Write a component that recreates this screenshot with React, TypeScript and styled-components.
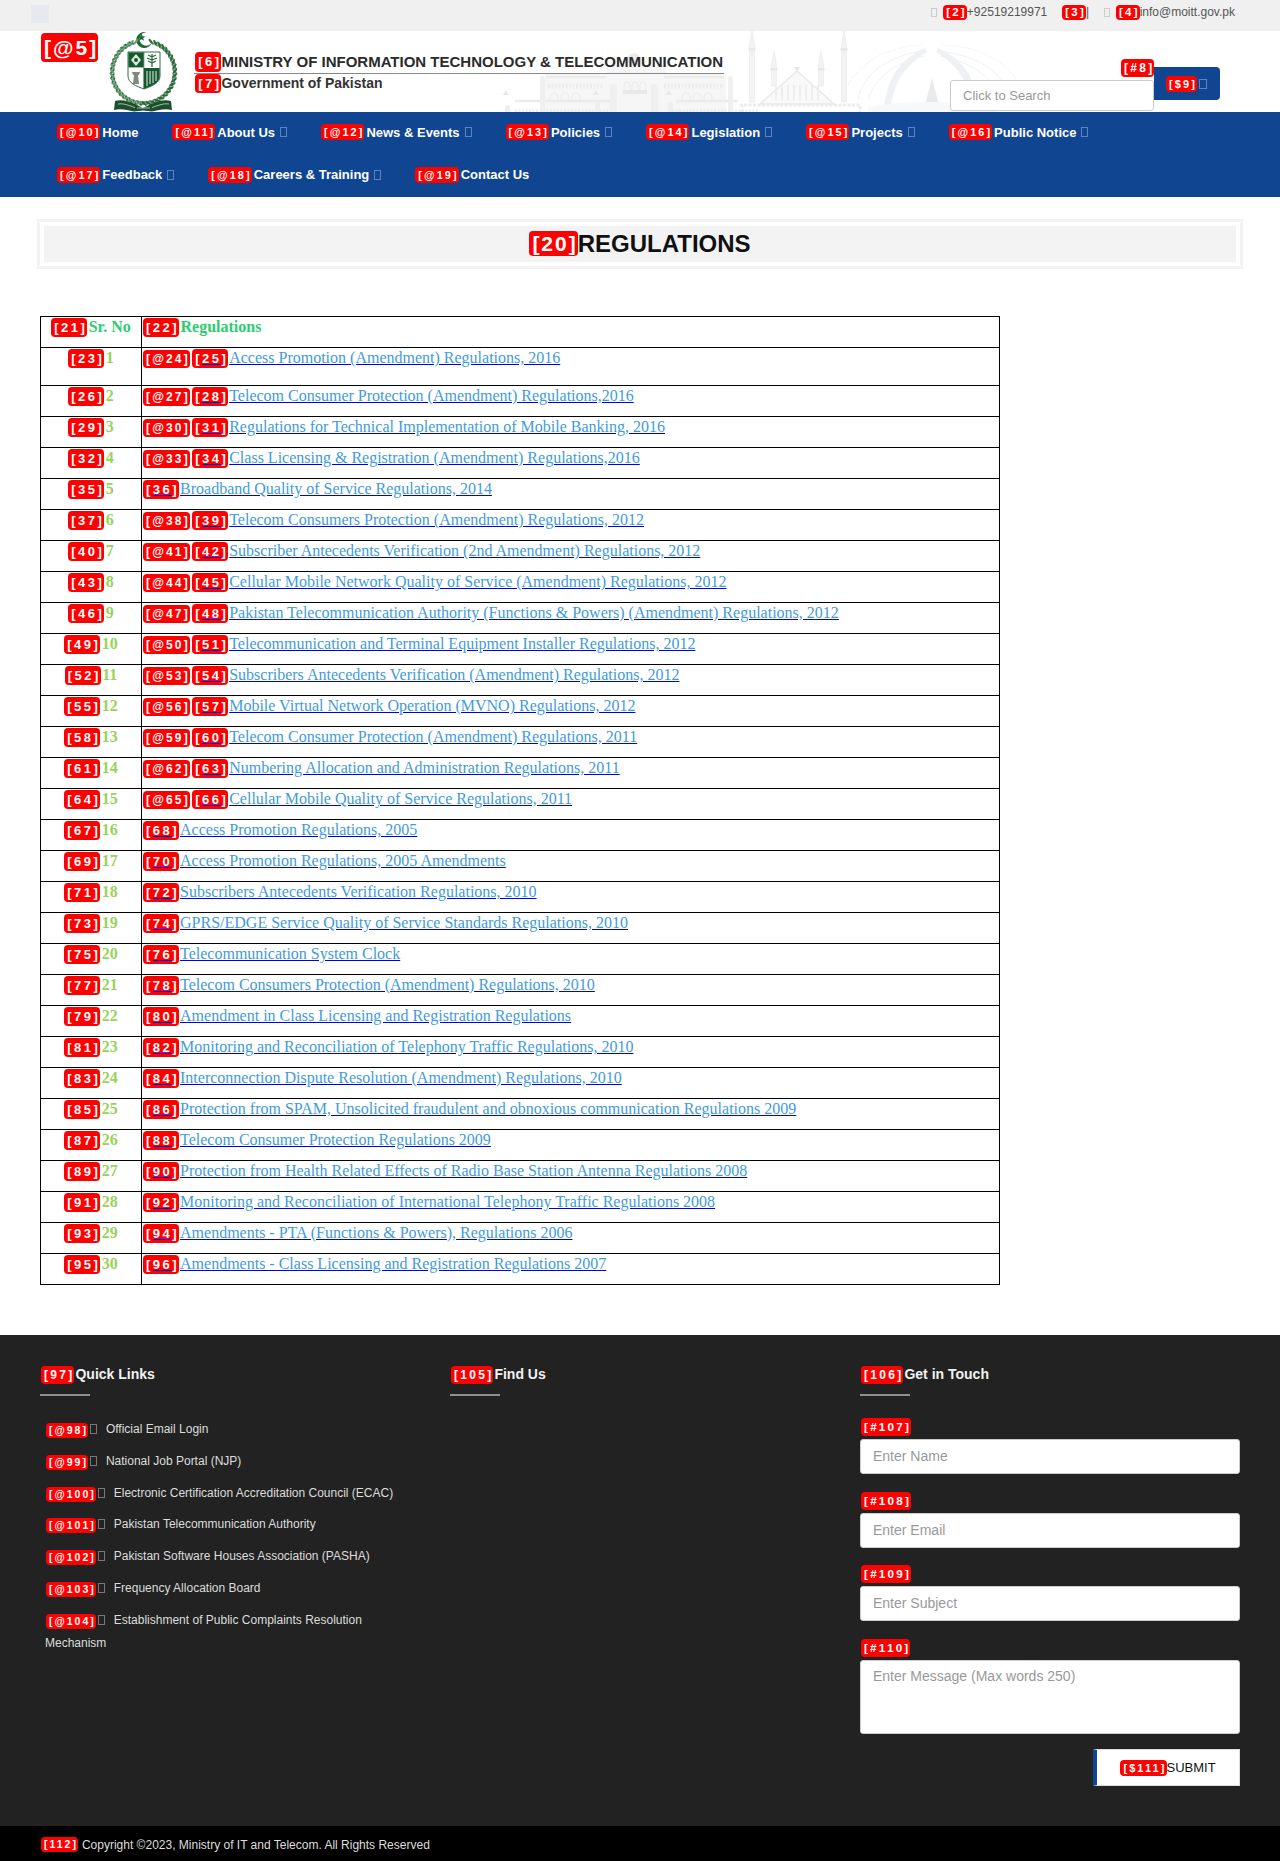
import React from "react";
import styled, { createGlobalStyle } from "styled-components";

const Global = createGlobalStyle`
  html, body { margin: 0; padding: 0; background: #fff; }
  body { font-family: "Liberation Sans", Arial, sans-serif; }
  * { box-sizing: border-box; }
`;

const Page = styled.div`
  width: 1280px;
  height: 1861px;
  overflow: hidden;
  display: flex;
  flex-direction: column;
`;

const Tag = styled.span<{ $size?: number; $h?: number; $ls?: string }>`
  display: inline-block;
  flex: none;
  background: #ff0000;
  color: #fff;
  font-family: "Liberation Sans", Arial, sans-serif;
  font-weight: 700;
  font-size: ${(p) => p.$size ?? 13}px;
  line-height: ${(p) => p.$h ?? 19}px;
  height: ${(p) => p.$h ?? 19}px;
  letter-spacing: ${(p) => p.$ls ?? "0.19em"};
  padding: 0 0 0 3px;
  border-radius: 4px;
  white-space: nowrap;
`;

const Digits = styled.span`
  text-decoration: underline;
  text-decoration-color: #0000ee;
  text-decoration-thickness: 1px;
  text-underline-offset: 1px;
`;

const Tofu = styled.span<{ $color?: string; $w?: number; $h?: number }>`
  display: inline-block;
  flex: none;
  width: ${(p) => p.$w ?? 7}px;
  height: ${(p) => p.$h ?? 10}px;
  border: 1px solid ${(p) => p.$color ?? "#ccc"};
`;

/* ---------- top bar ---------- */
const TopBar = styled.div`
  height: 31px;
  flex: none;
  background: #f0f0f0;
  display: flex;
  align-items: flex-start;
  justify-content: space-between;
  padding: 5px 45px 0 31px;
`;
const SkipSquare = styled.div`
  width: 18px;
  height: 18px;
  background: #e8e9ee;
`;
const Contacts = styled.div`
  display: flex;
  align-items: flex-start;
  height: 15px;
  font-size: 12px;
  line-height: 14px;
  color: #555;
`;
const ContactItem = styled.span<{ $gap?: number }>`
  display: inline-flex;
  align-items: flex-start;
  margin-left: ${(p) => p.$gap ?? 0}px;
`;
const ContactBox = styled(Tofu)<{ $gap?: number }>`
  margin: 3px 0 0 ${(p) => p.$gap ?? 0}px;
`;

/* ---------- header ---------- */
const Header = styled.header`
  position: relative;
  height: 81px;
  flex: none;
  background: #fff;
  display: flex;
  align-items: flex-start;
  padding: 2px 60px 0 41px;
  overflow: hidden;
`;
const Skyline = styled.svg`
  position: absolute;
  left: 0;
  top: 0;
  width: 1280px;
  height: 81px;
`;
const LogoTag = styled(Tag)`
  position: relative;
`;
const Emblem = styled.svg`
  position: relative;
  flex: none;
  width: 69px;
  height: 81px;
  margin: -2px 0 0 11px;
`;
const TitleBlock = styled.div`
  position: relative;
  margin: 19px 0 0 16px;
  width: 530px;
`;
const Ministry = styled.h1`
  margin: 0;
  height: 22px;
  display: flex;
  align-items: flex-start;
  font-size: 15px;
  font-weight: 700;
  line-height: 20px;
  color: #2b2b2b;
  border-bottom: 1px solid #888;
  padding-left: 1px;
  white-space: nowrap;
`;
const Gov = styled.div`
  display: flex;
  padding-left: 1px;
  font-size: 14px;
  font-weight: 700;
  line-height: 19px;
  color: #333;
  white-space: nowrap;
`;
const SearchBox = styled.div`
  position: relative;
  margin: 47px 0 0 auto;
  display: flex;
  align-items: flex-start;
`;
const SearchInput = styled.input`
  width: 204px;
  height: 31px;
  border: 1px solid #ccc;
  border-radius: 3px;
  padding: 0 12px 1px;
  background: #fff;
  font: 13px "Liberation Sans", Arial, sans-serif;
  &::placeholder { color: #999; opacity: 1; }
`;
const SearchFloat = styled(Tag)`
  position: absolute;
  left: 171px;
  top: -21px;
`;
const SearchButton = styled.button`
  width: 66px;
  height: 33px;
  margin-top: -13px;
  border: 0;
  border-radius: 0 4px 4px 0;
  background: #104591;
  display: flex;
  align-items: center;
  padding: 0 0 0 12px;
  gap: 2px;
`;

/* ---------- nav ---------- */
const Nav = styled.nav`
  flex: none;
  height: 85px;
  background: #104591;
  padding: 0 40px;
  display: flex;
  flex-wrap: wrap;
  align-content: flex-start;
`;
const NavItem = styled.a`
  height: 42.5px;
  padding: 0 17px 2px;
  display: flex;
  align-items: center;
  color: #fff;
  font-size: 13px;
  font-weight: 700;
`;
const NavLabel = styled.span`
  margin-left: 2px;
`;
const NavCaret = styled(Tofu)`
  margin-left: 5px;
`;

/* ---------- content ---------- */
const Main = styled.main`
  flex: none;
  padding: 22px 37px 50px;
`;
const Heading = styled.div`
  height: 50px;
  border: 3px solid #f3f3f3;
  padding: 4px;
`;
const HeadingInner = styled.h2`
  margin: 0;
  height: 36px;
  padding-bottom: 2px;
  background: #f3f3f3;
  display: flex;
  align-items: center;
  justify-content: center;
  font-size: 24px;
  font-weight: 700;
  line-height: 25px;
  color: #111;
`;
const Table = styled.table`
  margin: 47px 0 0 3px;
  width: 960px;
  border-collapse: collapse;
  table-layout: fixed;
  font-family: "Liberation Serif", "Times New Roman", serif;
  font-size: 16px;
`;
const Row = styled.tr<{ $h: number }>`
  height: ${(p) => p.$h}px;
`;
const SrCell = styled.td`
  width: 101px;
  border: 1px solid #000;
  padding: 0 1px;
  vertical-align: top;
  text-align: center;
  color: #98d35a;
  font-weight: 700;
  line-height: 20px;
  white-space: nowrap;
`;
const SrHead = styled(SrCell)`
  color: #2ecc71;
`;
const TitleCell = styled.td`
  border: 1px solid #000;
  padding: 0 1px;
  vertical-align: top;
  line-height: 20px;
  white-space: nowrap;
`;
const TitleHead = styled(TitleCell)`
  color: #2ecc71;
  font-weight: 700;
`;
const CellTag = styled(Tag)`
  margin-right: 1.5px;
`;
const SmallTag = styled(Tag)`
  font-size: 12px;
  letter-spacing: 0.18em;
  height: 18px;
  line-height: 18px;
  margin-right: 2.3px;
`;
const DocLink = styled.a`
  color: #0000ee;
  text-decoration: underline;
`;
const DocTitle = styled.span`
  color: #3f9bdc;
  margin-left: 1px;
`;

/* ---------- footer ---------- */
const Footer = styled.footer`
  flex: none;
  height: 491px;
  background: #222;
  padding: 31px 40px 0;
  display: grid;
  grid-template-columns: 410px 410px 380px;
`;
const FooterTitle = styled.h3`
  margin: 0;
  display: flex;
  align-items: flex-start;
  padding-left: 1px;
  color: #f2f2f2;
  font-size: 14px;
  font-weight: 700;
  line-height: 17px;
`;
const FooterLabel = styled.span`
  margin-left: 1px;
`;
const Rule = styled.div`
  width: 50px;
  height: 2px;
  margin-top: 10px;
  background: #8f8f8f;
`;
const QuickList = styled.ul`
  list-style: none;
  margin: 17.6px 0 0;
  padding: 0;
  width: 360px;
`;
const QuickItem = styled.li`
  padding: 4.4px 0 4.4px 5px;
  line-height: 23px;
  font-size: 12px;
  color: #ddd;
`;
const QuickTag = styled(Tag)`
  font-size: 10.5px;
  height: 15px;
  line-height: 15px;
  margin-left: 1px;
  vertical-align: -1px;
`;
const QuickBox = styled(Tofu)`
  margin: 0 9px 0 2px;
  vertical-align: -1px;
  border-color: #777;
`;
const Form = styled.form`
  margin-top: 22px;
`;
const Field = styled.label`
  display: block;
  margin-bottom: 17.5px;
`;
const FieldTag = styled(Tag)`
  display: block;
  width: fit-content;
  font-size: 11.7px;
  height: 18px;
  line-height: 18px;
  margin: 0 0 3px 1px;
`;
const controlCss = `
  display: block;
  width: 380px;
  border: 1px solid #ccc;
  border-radius: 3px;
  background: #fff;
  padding: 0 12px;
  font: 14px "Liberation Sans", Arial, sans-serif;
`;
const Input = styled.input`
  ${controlCss}
  height: 35px;
  padding-bottom: 1px;
  &::placeholder { color: #999; opacity: 1; }
`;
const TextArea = styled.textarea`
  ${controlCss}
  height: 74px;
  padding-top: 7px;
  resize: none;
  &::placeholder { color: #999; opacity: 1; }
`;
const Submit = styled.button`
  display: flex;
  align-items: center;
  justify-content: center;
  width: 147px;
  height: 37px;
  margin: -2px 0 0 233px;
  background: #fff;
  border: 1px solid #ddd;
  border-left: 4px solid #104591;
  color: #111;
  font: 13px "Liberation Sans", Arial, sans-serif;
  padding: 0;
`;
const BottomBar = styled.div`
  flex: none;
  height: 35px;
  background: #000;
  color: #ddd;
  font-size: 12px;
  display: flex;
  align-items: center;
  padding: 2px 0 0 41px;
  gap: 4px;
`;

/* ---------- data ---------- */
type Doc = { sr: number; srTag: number; at?: number; tag: number; title: string };
const docs: Doc[] = [
  { sr: 1, srTag: 23, at: 24, tag: 25, title: "Access Promotion (Amendment) Regulations, 2016" },
  { sr: 2, srTag: 26, at: 27, tag: 28, title: "Telecom Consumer Protection (Amendment) Regulations,2016" },
  { sr: 3, srTag: 29, at: 30, tag: 31, title: "Regulations for Technical Implementation of Mobile Banking, 2016" },
  { sr: 4, srTag: 32, at: 33, tag: 34, title: "Class Licensing & Registration (Amendment) Regulations,2016" },
  { sr: 5, srTag: 35, tag: 36, title: "Broadband Quality of Service Regulations, 2014" },
  { sr: 6, srTag: 37, at: 38, tag: 39, title: "Telecom Consumers Protection (Amendment) Regulations, 2012" },
  { sr: 7, srTag: 40, at: 41, tag: 42, title: "Subscriber Antecedents Verification (2nd Amendment) Regulations, 2012" },
  { sr: 8, srTag: 43, at: 44, tag: 45, title: "Cellular Mobile Network Quality of Service (Amendment) Regulations, 2012" },
  { sr: 9, srTag: 46, at: 47, tag: 48, title: "Pakistan Telecommunication Authority (Functions & Powers) (Amendment) Regulations, 2012" },
  { sr: 10, srTag: 49, at: 50, tag: 51, title: "Telecommunication and Terminal Equipment Installer Regulations, 2012" },
  { sr: 11, srTag: 52, at: 53, tag: 54, title: "Subscribers Antecedents Verification (Amendment) Regulations, 2012" },
  { sr: 12, srTag: 55, at: 56, tag: 57, title: "Mobile Virtual Network Operation (MVNO) Regulations, 2012" },
  { sr: 13, srTag: 58, at: 59, tag: 60, title: "Telecom Consumer Protection (Amendment) Regulations, 2011" },
  { sr: 14, srTag: 61, at: 62, tag: 63, title: "Numbering Allocation and Administration Regulations, 2011" },
  { sr: 15, srTag: 64, at: 65, tag: 66, title: "Cellular Mobile Quality of Service Regulations, 2011" },
  { sr: 16, srTag: 67, tag: 68, title: "Access Promotion Regulations, 2005" },
  { sr: 17, srTag: 69, tag: 70, title: "Access Promotion Regulations, 2005 Amendments" },
  { sr: 18, srTag: 71, tag: 72, title: "Subscribers Antecedents Verification Regulations, 2010" },
  { sr: 19, srTag: 73, tag: 74, title: "GPRS/EDGE Service Quality of Service Standards Regulations, 2010" },
  { sr: 20, srTag: 75, tag: 76, title: "Telecommunication System Clock" },
  { sr: 21, srTag: 77, tag: 78, title: "Telecom Consumers Protection (Amendment) Regulations, 2010" },
  { sr: 22, srTag: 79, tag: 80, title: "Amendment in Class Licensing and Registration Regulations" },
  { sr: 23, srTag: 81, tag: 82, title: "Monitoring and Reconciliation of Telephony Traffic Regulations, 2010" },
  { sr: 24, srTag: 83, tag: 84, title: "Interconnection Dispute Resolution (Amendment) Regulations, 2010" },
  { sr: 25, srTag: 85, tag: 86, title: "Protection from SPAM, Unsolicited fraudulent and obnoxious communication Regulations 2009" },
  { sr: 26, srTag: 87, tag: 88, title: "Telecom Consumer Protection Regulations 2009" },
  { sr: 27, srTag: 89, tag: 90, title: "Protection from Health Related Effects of Radio Base Station Antenna Regulations 2008" },
  { sr: 28, srTag: 91, tag: 92, title: "Monitoring and Reconciliation of International Telephony Traffic Regulations 2008" },
  { sr: 29, srTag: 93, tag: 94, title: "Amendments - PTA (Functions & Powers), Regulations 2006" },
  { sr: 30, srTag: 95, tag: 96, title: "Amendments - Class Licensing and Registration Regulations 2007" },
];

const navItems: { tag: string; label: string; caret: boolean }[] = [
  { tag: "@10", label: "Home", caret: false },
  { tag: "@11", label: "About Us", caret: true },
  { tag: "@12", label: "News & Events", caret: true },
  { tag: "@13", label: "Policies", caret: true },
  { tag: "@14", label: "Legislation", caret: true },
  { tag: "@15", label: "Projects", caret: true },
  { tag: "@16", label: "Public Notice", caret: true },
  { tag: "@17", label: "Feedback", caret: true },
  { tag: "@18", label: "Careers & Training", caret: true },
  { tag: "@19", label: "Contact Us", caret: false },
];

const quick: { tag: string; label: string }[] = [
  { tag: "@98", label: "Official Email Login" },
  { tag: "@99", label: "National Job Portal (NJP)" },
  { tag: "@100", label: "Electronic Certification Accreditation Council (ECAC)" },
  { tag: "@101", label: "Pakistan Telecommunication Authority" },
  { tag: "@102", label: "Pakistan Software Houses Association (PASHA)" },
  { tag: "@103", label: "Frequency Allocation Board" },
  { tag: "@104", label: "Establishment of Public Complaints Resolution Mechanism" },
];

const fields: { tag: string; ph: string }[] = [
  { tag: "#107", ph: "Enter Name" },
  { tag: "#108", ph: "Enter Email" },
  { tag: "#109", ph: "Enter Subject" },
];

/* ---------- drawings ---------- */
function leaves(side: 1 | -1) {
  const out: React.ReactNode[] = [];
  for (let i = 0; i < 20; i++) {
    const t = i / 19;
    const ang = -1.25 + t * 2.75;
    const x = 34.5 + side * 29.5 * Math.cos(ang);
    const y = 41 + 29.5 * Math.sin(ang);
    const rot = side * ((ang * 180) / Math.PI + 90);
    out.push(
      <g key={i} transform={`translate(${x.toFixed(1)} ${y.toFixed(1)}) rotate(${rot.toFixed(0)})`}>
        <ellipse cx={-3} cy={0} rx={3.4} ry={1.2} fill="#2e6a3e" transform="rotate(35)" />
        <ellipse cx={3} cy={0} rx={3.4} ry={1.2} fill="#6b9a75" transform="rotate(-35)" />
      </g>
    );
  }
  return out;
}

const EmblemArt = () => (
  <Emblem viewBox="0 0 69 81" aria-hidden="true">
    <path d="M38 1.500a8 8 0 1 0 5 9.500a6.600 6.600 0 1 1-5-9.500z" fill="#1d6a35" />
    <polygon points="32.500,2.500 33.600,5.200 36.400,5.400 34.200,7.100 35,9.800 32.500,8.300 30,9.800 30.800,7.100 28.600,5.400 31.400,5.200" fill="#1d6a35" />
    {leaves(1)}
    {leaves(-1)}
    <path d="M19 21h32v24c0 7-8 10-16 13c-8-3-16-6-16-13z" fill="#fff" stroke="#1d5b30" strokeWidth="0.9" />
    <rect x="19.400" y="21.400" width="15.200" height="15" fill="#14592f" />
    <polygon points="27,23 32,29 27,35 22,29" fill="#dfe9df" />
    <circle cx="27" cy="29" r="2" fill="#14592f" />
    <path d="M43 23v13M43 26l-4-2M43 26l4-2M43 29l-5-2M43 29l5-2M43 32l-4-2M43 32l4-2" stroke="#2e6a3e" strokeWidth="1.300" fill="none" />
    <path d="M35 37h15.600v9c0 5-7 9-15.600 11.600z" fill="#14592f" />
    <path d="M38 40v15M41 40v13M44 40v12M47 40v10" stroke="#fff" strokeWidth="0.9" />
    <path d="M23 41h8l-1 3h-1l1 9h-6l1-9h-1z" fill="#7c8a80" />
    <path d="M34.800 21v37" stroke="#1d5b30" strokeWidth="0.8" />
    <path d="M6 70c8-2 14 1 20 3l8 4l8-4c6-2 12-5 20-3l1 9c-7-2-13 0-20 1.500l-9-1l-9 1c-7-1.500-13-3.500-20-1.500z" fill="#1c4f2c" />
    <path d="M9 73c6-1 12 2 17 3.500M60 73c-6-1-12 2-17 3.500M28 77h13" stroke="#dfe9df" strokeWidth="0.7" fill="none" />
  </Emblem>
);

const minaret = (x: number, top: number, bottom: number) => (
  <g key={x}>
    <path d={`M${x} ${top}l2.500 14v${bottom - top - 14}h-5v-${bottom - top - 14}z`} fill="#f3f3f4" stroke="#e6e7e9" strokeWidth="0.6" />
    <rect x={x - 3.5} y={top + 17} width={7} height={2.5} fill="#e6e7e9" />
  </g>
);

const SkylineArt = () => (
  <Skyline viewBox="0 31 1280 81" aria-hidden="true">
    <g fill="#f6f6f6">
      <rect x="545" y="74" width="62" height="38" />
      <rect x="664" y="74" width="62" height="38" />
      <rect x="606" y="65" width="60" height="47" />
    </g>
    <g stroke="#ececec" strokeWidth="1" fill="none">
      <path d="M546 77h60M664 77h60" strokeWidth="2.500" />
      <path d="M515 101h95M676 101h62" strokeWidth="2.500" />
      <path d="M515 111h95M672 111h88" strokeDasharray="2 1.500" strokeWidth="3" />
      <path d="M548 86h56M664 86h60" strokeDasharray="2 1.500" strokeWidth="5" />
      <path d="M550 100v-3a4 4 0 0 1 8 0v3M561 100v-3a4 4 0 0 1 8 0v3M572 100v-3a4 4 0 0 1 8 0v3M682 100v-3a4 4 0 0 1 8 0v3M693 100v-3a4 4 0 0 1 8 0v3M704 100v-3a4 4 0 0 1 8 0v3" />
      <path d="M624 92v-7a3 3 0 0 1 6 0v7M632 92v-7a3 3 0 0 1 6 0v7M640 92v-7a3 3 0 0 1 6 0v7" />
    </g>
    <path d="M627 65v-5a7 7 0 0 1 14 0v5z" fill="#ececee" />
    <rect x="623" y="90" width="24" height="4" fill="#e8e8e8" />
    {[540, 610, 651, 728].map((x) => (
      <rect key={x} x={x} y={x === 540 || x === 728 ? 76 : 84} width={x === 540 || x === 728 ? 5 : 7} height={36} rx={3} fill="#f0f0f0" />
    ))}
    <path d="M509 95l-2.500-4h-1l-3 4zM599 95l-2.500-4h-1l-3 4zM672 95l-2.500-4h-1l-3 4z" fill="#e8e8e8" />
    <rect x="505" y="105" width="5" height="8" rx="2" fill="#efefef" />
    <rect x="595" y="102" width="5" height="11" rx="2" fill="#efefef" />
    <rect x="668" y="102" width="5" height="11" rx="2" fill="#efefef" />
    {minaret(752, 31, 102)}
    {minaret(774, 51, 86)}
    {minaret(821, 51, 86)}
    {minaret(844, 31, 102)}
    <path d="M797 71l-37 33h74z" fill="#f9f9fa" stroke="#e9e9eb" strokeWidth="1.500" />
    <path d="M797 71l-3 -4h6z" fill="#e2e3e6" />
    <g fill="#eeeef0">
      {[775, 781, 787, 793, 799, 805, 811, 817].map((x) => (
        <rect key={x} x={x} y={85} width={2} height={15} />
      ))}
    </g>
    <path d="M742 112v-7h118v7" stroke="#ececee" strokeWidth="3" fill="none" strokeDasharray="3 1.500" />
    <g fill="none" stroke="#f1f2f5" strokeWidth="1">
      <path d="M848 85c15-28 50-40 76-40M1020 85c-15-28-50-40-80-40" strokeDasharray="2 1.500" />
      <path d="M858 100c5-28 32-44 64-49M868 100c6-22 28-38 56-44M1010 100c-5-28-32-44-70-49M1000 100c-6-22-28-38-60-44" />
    </g>
    <g fill="#f0f1f4">
      <path d="M925 48c-24 10-38 30-41 60h7c2-26 16-44 36-56z" />
      <path d="M938 48c24 10 38 30 41 60h-7c-2-26-16-44-36-56z" />
      <path d="M932 78l-7 27h14z" fill="#e8eaee" />
    </g>
    <path d="M868 108c20-8 105-8 130 0v4h-130z" fill="#f7f8f9" />
  </Skyline>
);

/* ---------- page ---------- */
const LinkTag = ({ n }: { n: number }) => (
  <Tag>
    [<Digits>{n}</Digits>]
  </Tag>
);

export default function App() {
  return (
    <Page>
      <Global />
      <TopBar>
        <SkipSquare />
        <Contacts>
          <ContactBox $w={6} $h={9} $color="#ccc" />
          <ContactItem $gap={6}>
            <Tag $size={11.5} $h={15}>[2]</Tag>+92519219971
          </ContactItem>
          <ContactItem $gap={15}>
            <Tag $size={11.5} $h={15}>[3]</Tag>|
          </ContactItem>
          <ContactBox $w={6} $h={9} $color="#ccc" $gap={15} />
          <ContactItem $gap={6}>
            <Tag $size={11.5} $h={15}>[4]</Tag>info@moitt.gov.pk
          </ContactItem>
        </Contacts>
      </TopBar>

      <Header>
        <SkylineArt />
        <LogoTag $size={21} $h={29} $ls="2px">[@5]</LogoTag>
        <EmblemArt />
        <TitleBlock>
          <Ministry>
            <Tag $h={20}>[6]</Tag>MINISTRY OF INFORMATION TECHNOLOGY &amp; TELECOMMUNICATION
          </Ministry>
          <Gov>
            <Tag $h={19}>[7]</Tag>Government of Pakistan
          </Gov>
        </TitleBlock>
        <SearchBox>
          <SearchFloat $size={12} $h={18}>[#8]</SearchFloat>
          <SearchInput placeholder="Click to Search" />
          <SearchButton>
            <Tag $size={11} $h={16}>[$9]</Tag>
            <Tofu $color="#5f83b8" $w={8} $h={10} />
          </SearchButton>
        </SearchBox>
      </Header>

      <Nav>
        {navItems.map((n) => (
          <NavItem key={n.tag}>
            <Tag $size={10.9} $h={16}>[{n.tag}]</Tag>
            <NavLabel>{n.label}</NavLabel>
            {n.caret && <NavCaret $color="#5f83b8" $w={7} $h={10} />}
          </NavItem>
        ))}
      </Nav>

      <Main>
        <Heading>
          <HeadingInner>
            <Tag $size={21} $h={25} $ls="2px">[20]</Tag>REGULATIONS
          </HeadingInner>
        </Heading>
        <Table>
          <tbody>
            <Row $h={31}>
              <SrHead>
                <CellTag>[21]</CellTag>Sr. No
              </SrHead>
              <TitleHead>
                <CellTag>[22]</CellTag>Regulations
              </TitleHead>
            </Row>
            {docs.map((d) => (
              <Row key={d.sr} $h={d.sr === 1 ? 38 : 31}>
                <SrCell>
                  <CellTag>[{d.srTag}]</CellTag>
                  {d.sr}
                </SrCell>
                <TitleCell>
                  {d.at !== undefined && <SmallTag>[@{d.at}]</SmallTag>}
                  <DocLink>
                    <LinkTag n={d.tag} />
                    <DocTitle>{d.title}</DocTitle>
                  </DocLink>
                </TitleCell>
              </Row>
            ))}
          </tbody>
        </Table>
      </Main>

      <Footer>
        <div>
          <FooterTitle>
            <Tag $size={12} $h={18}>[97]</Tag>
            <FooterLabel>Quick Links</FooterLabel>
          </FooterTitle>
          <Rule />
          <QuickList>
            {quick.map((q) => (
              <QuickItem key={q.tag}>
                <QuickTag>[{q.tag}]</QuickTag>
                <QuickBox />
                {q.label}
              </QuickItem>
            ))}
          </QuickList>
        </div>
        <div>
          <FooterTitle>
            <Tag $size={12} $h={18}>[105]</Tag>
            <FooterLabel>Find Us</FooterLabel>
          </FooterTitle>
          <Rule />
        </div>
        <div>
          <FooterTitle>
            <Tag $size={12} $h={18}>[106]</Tag>
            <FooterLabel>Get in Touch</FooterLabel>
          </FooterTitle>
          <Rule />
          <Form>
            {fields.map((f) => (
              <Field key={f.tag}>
                <FieldTag>[{f.tag}]</FieldTag>
                <Input placeholder={f.ph} />
              </Field>
            ))}
            <Field>
              <FieldTag>[#110]</FieldTag>
              <TextArea placeholder="Enter Message (Max words 250)" />
            </Field>
            <Submit type="button">
              <Tag $size={11} $h={16}>[$111]</Tag>SUBMIT
            </Submit>
          </Form>
        </div>
      </Footer>

      <BottomBar>
        <Tag $size={10.5} $h={15}>[112]</Tag>
        Copyright ©2023, Ministry of IT and Telecom. All Rights Reserved
      </BottomBar>
    </Page>
  );
}
